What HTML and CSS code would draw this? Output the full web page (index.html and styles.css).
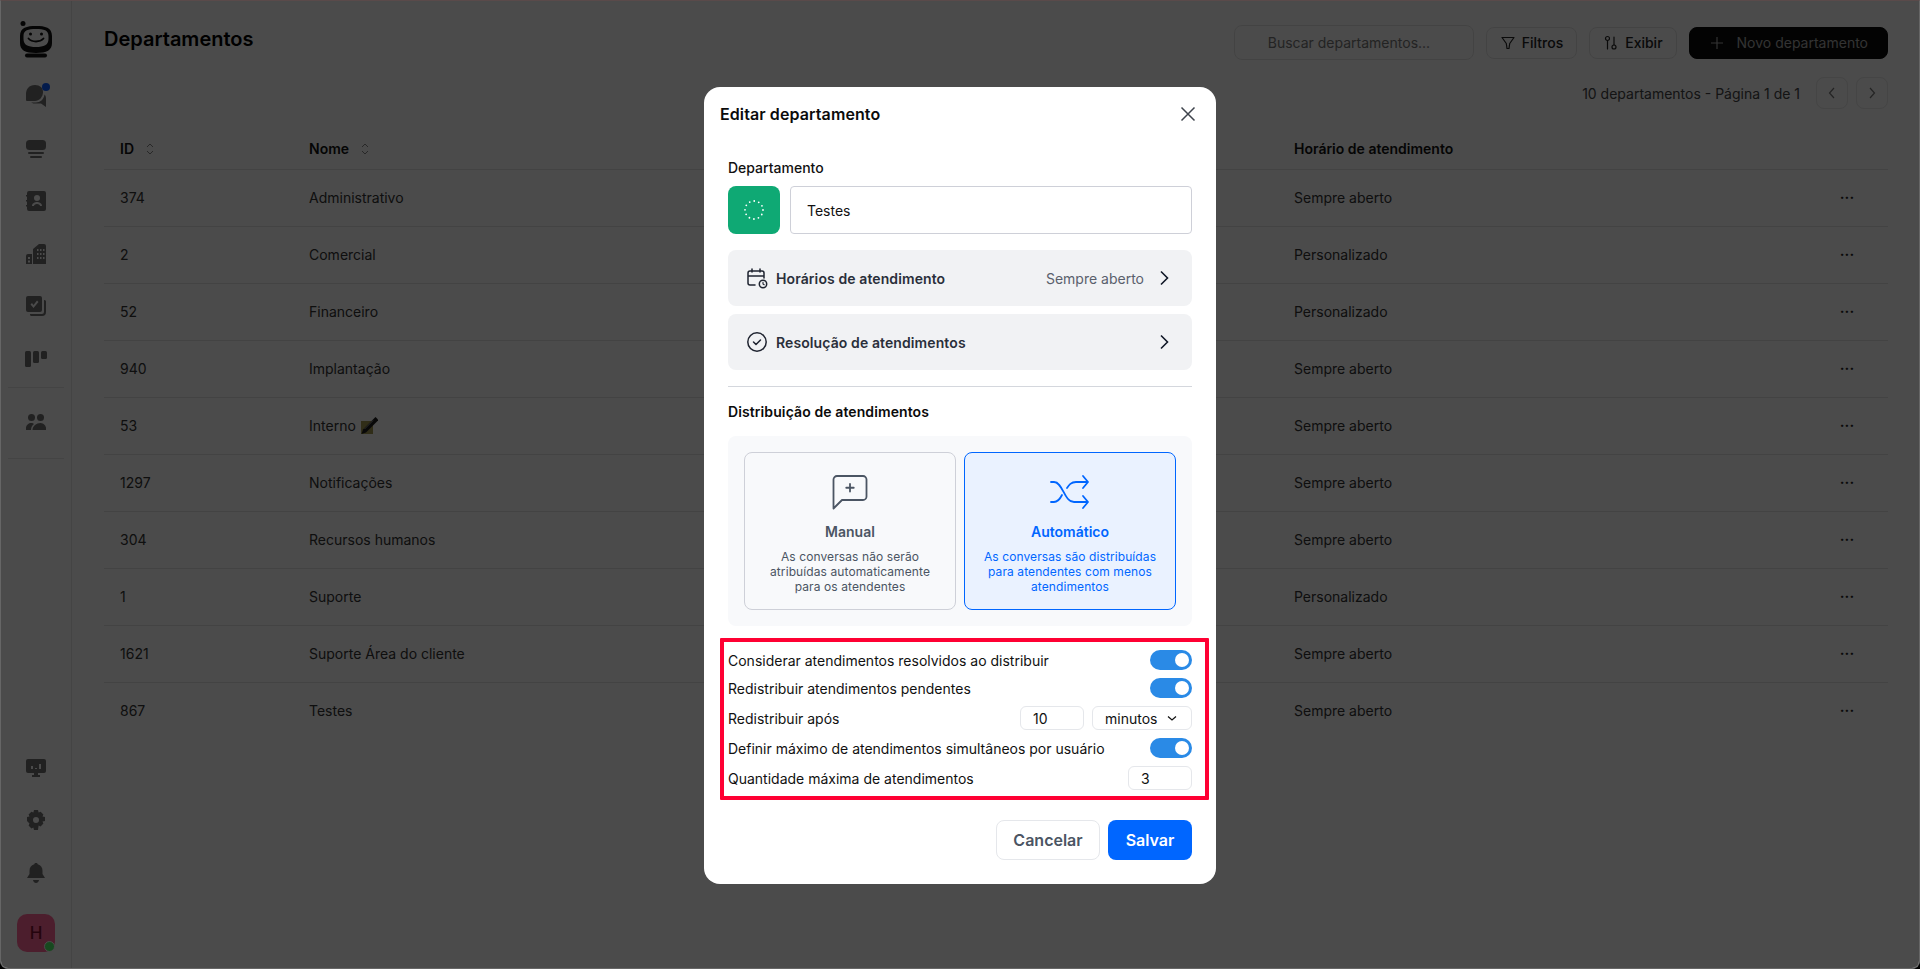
FILE: index.html
```html
<!DOCTYPE html>
<html lang="pt-BR">
<head>
  <meta charset="UTF-8" />
  <meta name="viewport" content="width=device-width, initial-scale=1.0" />
  <title>Departamentos</title>
  <link rel="stylesheet" href="styles.css">
</head>
<body>
  <div class="app">

    <aside class="sidebar">
      <a class="logo">
        <svg width="34" height="38" viewBox="0 0 34 38">
          <circle cx="4" cy="3.500" r="2.500" fill="#111"/>
          <path fill-rule="evenodd" fill="#111" d="M17 6c9 0 16 1.500 16 10v7c0 7-5 10-16 10S1 30 1 23v-7C1 7.500 8 6 17 6zm0 3c-8 0-12.500 1-12.500 7v3c0 6 4.500 8 12.500 8s12.500-2 12.500-8v-3c0-6-4.500-7-12.500-7z"/>
          <rect x="6" y="33.500" width="22" height="4" rx="2" fill="#111"/>
          <circle cx="11.500" cy="14" r="1.500" fill="#111"/>
          <circle cx="22.500" cy="14" r="1.500" fill="#111"/>
          <path d="M9.500 18.500c3.500 4 11.500 4 15 0" fill="none" stroke="#111" stroke-width="1.800" stroke-linecap="round"/>
        </svg>
      </a>
      <nav class="side-nav">
        <a class="side-link has-dot">
          <svg width="20" height="22" viewBox="0 0 20 22"><path d="M9 0c5 0 8 3 8 7 0 5-4 9-8 9H1a1 1 0 0 1-1-1V9c0-5 3-9 9-9z"/><path d="M18.500 9.500c1 1 1.500 2.500 1.500 4V22l-5-3.500H7.500L5 17.500h5c4 0 8-3 8.500-8z"/></svg>
        </a>
        <a class="side-link">
          <svg width="20" height="20" viewBox="0 0 20 20"><rect x="0" y="1" width="20" height="10" rx="3.500"/><rect x="2" y="13" width="16" height="2" rx="1"/><rect x="4" y="17" width="12" height="2" rx="1"/></svg>
        </a>
        <a class="side-link">
          <svg width="20" height="20" viewBox="0 0 20 20"><path fill-rule="evenodd" d="M3 0h15a2 2 0 0 1 2 2v16a2 2 0 0 1-2 2H3a2 2 0 0 1-2-2V2a2 2 0 0 1 2-2zm8 4a3 3 0 1 0 0 6 3 3 0 0 0 0-6zm-5 11c0-3 3-4 5-4s5 1 5 4h-2c0-1-1-2-3-2s-3 1-3 2z"/><rect x="0" y="4" width="2" height="1.500"/><rect x="0" y="9" width="2" height="1.500"/><rect x="0" y="14" width="2" height="1.500"/></svg>
        </a>
        <a class="side-link">
          <svg width="20" height="20" viewBox="0 0 20 20"><path fill-rule="evenodd" d="M7 5l6-5h5a2 2 0 0 1 2 2v18H7zM11 5v2h1.500V5zm3 0v2h1.500V5zm3 0v2h1.500V5zM11 9v2h1.500V9zm3 0v2h1.500V9zm3 0v2h1.500V9zm-6 4v2h1.500v-2zm3 0v2h1.500v-2zm3 0v2h1.500v-2z"/><path fill-rule="evenodd" d="M2 10h4v10H0v-8a2 2 0 0 1 2-2zm0 3v2h2v-2zm0 3.500v2h2v-2z"/></svg>
        </a>
        <a class="side-link">
          <svg width="20" height="20" viewBox="0 0 20 20"><path fill-rule="evenodd" d="M2 0h12a2 2 0 0 1 2 2v12a2 2 0 0 1-2 2H2a2 2 0 0 1-2-2V2a2 2 0 0 1 2-2zm2.500 8.500L6 7l1.500 2L11 4.500 12.500 6 7.500 12z"/><path d="M18 4h.500A1.500 1.500 0 0 1 20 5.500V16a4 4 0 0 1-4 4H5.500A1.500 1.500 0 0 1 4 18.500V18h12a2 2 0 0 0 2-2z"/></svg>
        </a>
        <a class="side-link">
          <svg width="22" height="16" viewBox="0 0 22 16"><rect width="6" height="16" rx="1.500"/><rect x="8" width="6" height="12" rx="1.500"/><rect x="16" width="6" height="8" rx="1.500"/></svg>
        </a>
        <div class="side-rule"></div>
        <a class="side-link">
          <svg width="20" height="16" viewBox="0 0 20 16"><circle cx="5.500" cy="3.500" r="3.500"/><circle cx="14.500" cy="3.500" r="3.500"/><path d="M0 16v-2c0-3 3-5 5-5 1.500 0 2.500.500 3 1-1.500 1-3 3-3 6z"/><path d="M6.500 16c0-4 4-7 8-7 3 0 5.500 3 5.500 5v2z"/></svg>
        </a>
        <div class="side-rule side-rule-end"></div>
      </nav>
      <div class="side-bottom">
        <a class="side-link">
          <svg width="20" height="18" viewBox="0 0 20 18"><path fill-rule="evenodd" d="M2 0h16a2 2 0 0 1 2 2v10a2 2 0 0 1-2 2h-6v2h2v2H6v-2h2v-2H2a2 2 0 0 1-2-2V2a2 2 0 0 1 2-2zm3 7v3h2V7zm4 2v1h2V9zm4-4v5h2V5z"/></svg>
        </a>
        <a class="side-link">
          <svg width="20" height="20" viewBox="0 0 20 20"><path fill-rule="evenodd" d="M8 0h4l.600 2.600 2-.900 2.800 2.800-.900 2 2.500.500v4l-2.500.600.900 2-2.800 2.800-2-.900L12 20H8l-.600-2.500-2 .900-2.800-2.800.900-2L1 11V7l2.500-.500-.900-2 2.800-2.800 2 .900zM10 7a3 3 0 1 0 0 6 3 3 0 0 0 0-6z"/></svg>
        </a>
        <a class="side-link">
          <svg width="18" height="20" viewBox="0 0 18 20"><path d="M9 0c1 0 1.500.500 1.700 1.200C14 2 15.500 4.500 15.500 8v3l2.500 4H0l2.500-4V8c0-3.500 1.500-6 4.800-6.800C7.500.500 8 0 9 0z"/><path d="M6 17h6c0 1.500-1.500 3-3 3s-3-1.500-3-3z"/></svg>
        </a>
        <div class="avatar">H<span class="online"></span></div>
      </div>
    </aside>

    <main class="content">
      <div class="topbar">
        <h1>Departamentos</h1>
        <div class="toolbar">
          <div class="search">Buscar departamentos...</div>
          <button class="btn">
            <svg width="16" height="16" viewBox="0 0 16 16" fill="none" stroke="currentColor" stroke-width="1.200" stroke-linejoin="round"><path d="M2 2.500h12L9.700 8.500l-.700 5H7l-.700-5z"/></svg>
            Filtros
          </button>
          <button class="btn">
            <svg width="16" height="16" viewBox="0 0 16 16" fill="none" stroke="currentColor" stroke-width="1.200" stroke-linecap="round"><circle cx="4.500" cy="3.500" r="2"/><path d="M4.500 5.500V14M11 2v8"/><circle cx="11" cy="12" r="2"/></svg>
            Exibir
          </button>
          <button class="btn btn-dark">
            <svg width="16" height="16" viewBox="0 0 16 16" fill="none" stroke="currentColor" stroke-width="1.200"><path d="M8 2v12M2 8h12"/></svg>
            Novo departamento
          </button>
        </div>
      </div>

      <div class="pager">
        <span>10 departamentos - Página 1 de 1</span>
        <button class="page-btn"><svg width="16" height="16" viewBox="0 0 16 16" fill="none" stroke="currentColor" stroke-width="1.200"><path d="M10 3L5.500 8l4.500 5"/></svg></button>
        <button class="page-btn"><svg width="16" height="16" viewBox="0 0 16 16" fill="none" stroke="currentColor" stroke-width="1.200"><path d="M6 3l4.500 5L6 13"/></svg></button>
      </div>

      <table class="dept-table">
        <colgroup><col class="col-id"><col class="col-name"><col class="col-hours"><col class="col-actions"></colgroup>
        <thead>
          <tr>
            <th>ID <svg class="sort" width="8" height="12" viewBox="0 0 8 12" fill="none" stroke="currentColor"><path d="M1 4l3-3 3 3M1 8l3 3 3-3"/></svg></th>
            <th>Nome <svg class="sort" width="8" height="12" viewBox="0 0 8 12" fill="none" stroke="currentColor"><path d="M1 4l3-3 3 3M1 8l3 3 3-3"/></svg></th>
            <th>Horário de atendimento</th>
            <th></th>
          </tr>
        </thead>
        <tbody>
          <tr><td>374</td><td>Administrativo</td><td>Sempre aberto</td><td class="dots">···</td></tr>
          <tr><td>2</td><td>Comercial</td><td>Personalizado</td><td class="dots">···</td></tr>
          <tr><td>52</td><td>Financeiro</td><td>Personalizado</td><td class="dots">···</td></tr>
          <tr><td>940</td><td>Implantação</td><td>Sempre aberto</td><td class="dots">···</td></tr>
          <tr><td>53</td><td>Interno <svg class="emoji" width="18" height="18" viewBox="0 0 18 18"><rect x="1" y="4" width="12" height="13" fill="#a09850"/><path d="M15.500 0L3 12.500 1.500 17l4.500-1.500L18.500 3z" fill="#1c1c1c"/><path d="M13 3.500L4.500 12" stroke="#9a9a9a" stroke-width="1"/></svg></td><td>Sempre aberto</td><td class="dots">···</td></tr>
          <tr><td>1297</td><td>Notificações</td><td>Sempre aberto</td><td class="dots">···</td></tr>
          <tr><td>304</td><td>Recursos humanos</td><td>Sempre aberto</td><td class="dots">···</td></tr>
          <tr><td>1</td><td>Suporte</td><td>Personalizado</td><td class="dots">···</td></tr>
          <tr><td>1621</td><td>Suporte Área do cliente</td><td>Sempre aberto</td><td class="dots">···</td></tr>
          <tr><td>867</td><td>Testes</td><td>Sempre aberto</td><td class="dots">···</td></tr>
        </tbody>
      </table>
    </main>

    <div class="overlay">
      <section class="modal">
        <header class="modal-head">
          <h2>Editar departamento</h2>
          <svg width="24" height="24" viewBox="0 0 24 24" fill="none" stroke="#3f444d" stroke-width="1.500"><path d="M5.500 5.500l13 13M18.500 5.500l-13 13"/></svg>
        </header>

        <div class="modal-body">
          <label class="field-label">Departamento</label>
          <div class="name-row">
            <div class="swatch">
              <svg width="22" height="22" viewBox="0 0 22 22"><circle cx="11" cy="11" r="9" fill="none" stroke="#fff" stroke-width="1.800" stroke-linecap="round" stroke-dasharray="0 4.710"/></svg>
            </div>
            <div class="name-input">Testes</div>
          </div>

          <div class="nav-rows">
            <div class="nav-row">
              <svg width="22" height="22" viewBox="0 0 22 22" fill="none" stroke="#1f2430" stroke-width="1.500" stroke-linecap="round"><path d="M9 18H4a2 2 0 0 1-2-2V6a2 2 0 0 1 2-2h12a2 2 0 0 1 2 2v5M2 9h16M6 2v3M14 2v3"/><circle cx="17" cy="17" r="3.700"/><path d="M17 15.200V17l1.200.700" stroke-width="1.100"/></svg>
              <span class="nav-title">Horários de atendimento</span>
              <span class="nav-value">Sempre aberto</span>
              <svg class="chev" width="20" height="20" viewBox="0 0 20 20" fill="none" stroke="#111827" stroke-width="1.600"><path d="M7 3.500l6.500 6.500L7 16.500"/></svg>
            </div>
            <div class="nav-row">
              <svg width="22" height="22" viewBox="0 0 22 22" fill="none" stroke="#1f2430" stroke-width="1.500" stroke-linecap="round" stroke-linejoin="round"><circle cx="11" cy="11" r="9.200"/><path d="M7.500 11l2.500 2.500 4.500-4.500"/></svg>
              <span class="nav-title">Resolução de atendimentos</span>
              <svg class="chev" width="20" height="20" viewBox="0 0 20 20" fill="none" stroke="#111827" stroke-width="1.600"><path d="M7 3.500l6.500 6.500L7 16.500"/></svg>
            </div>
          </div>

          <hr class="rule">

          <h3>Distribuição de atendimentos</h3>

          <div class="dist-panel">
            <div class="dist-card">
              <svg width="36" height="36" viewBox="0 0 36 36" fill="none" stroke="#4b5563" stroke-width="1.800" stroke-linejoin="round" stroke-linecap="round"><path d="M5 2h26a3.500 3.500 0 0 1 3.500 3.500v17a3.500 3.500 0 0 1-3.500 3.500H10l-8.500 8.500V5.500A3.500 3.500 0 0 1 5 2z"/><path d="M18 10v7.500M14.250 13.750h7.500"/></svg>
              <strong>Manual</strong>
              <p>As conversas não serão atribuídas automaticamente para os atendentes</p>
            </div>
            <div class="dist-card active">
              <svg width="40" height="36" viewBox="0 0 40 36" fill="none" stroke="#0066ff" stroke-width="1.800" stroke-linecap="round" stroke-linejoin="round"><path d="M1 8h3c9 0 10 20 20 20h14M1 28h3c4 0 6-3 8-7M17 14c2-3 4-6 9-6h12M33 2l5 6-5 6M33 22l5 6-5 6"/></svg>
              <strong>Automático</strong>
              <p>As conversas são distribuídas para atendentes com menos atendimentos</p>
            </div>
          </div>

          <div class="options">
            <div class="option"><span>Considerar atendimentos resolvidos ao distribuir</span><span class="toggle"></span></div>
            <div class="option"><span>Redistribuir atendimentos pendentes</span><span class="toggle"></span></div>
            <div class="option">
              <span>Redistribuir após</span>
              <span class="option-inputs">
                <span class="mini-input">10</span>
                <span class="mini-select">minutos
                  <svg width="12" height="12" viewBox="0 0 12 12" fill="none" stroke="#111" stroke-width="1.200"><path d="M2 4.500L6 8l4-3.500"/></svg>
                </span>
              </span>
            </div>
            <div class="option"><span>Definir máximo de atendimentos simultâneos por usuário</span><span class="toggle"></span></div>
            <div class="option"><span>Quantidade máxima de atendimentos</span><span class="mini-input">3</span></div>
            <div class="annotation"></div>
          </div>

          <div class="modal-actions">
            <button class="btn-cancel">Cancelar</button>
            <button class="btn-save">Salvar</button>
          </div>
        </div>
      </section>
    </div>
  </div>
</body>
</html>
```

FILE: styles.css
```css
* {
  box-sizing: border-box;
}

html,
body {
  height: 100%;
}

body {
  margin: 0;
  background: #000;
  font-family: Inter, "Noto Sans", sans-serif;
  font-size: 14px;
  color: #111;
}

.app {
  position: relative;
  display: flex;
  height: 969px;
  overflow: hidden;
  background: #fafafa;
  border: 1px solid #666;
  border-top-color: #5a4a4a;
  border-radius: 0 0 8px 8px;
}

/* sidebar */
.sidebar {
  width: 71px;
  flex-shrink: 0;
  display: flex;
  flex-direction: column;
  align-items: center;
  border-right: 1px solid #e5e5e5;
}

.logo {
  display: flex;
  margin-top: 19px;
  height: 38px;
}

.side-nav {
  display: flex;
  flex-direction: column;
  align-items: center;
  width: 100%;
  margin-top: 12px;
}

.side-link {
  position: relative;
  display: flex;
  align-items: center;
  justify-content: center;
  height: 52.500px;
  width: 100%;
}

.side-link svg {
  fill: #6e6e6e;
}

.has-dot::after {
  content: "";
  position: absolute;
  top: 13px;
  left: 41px;
  width: 8px;
  height: 8px;
  border-radius: 50%;
  background: #0a5cff;
}

.side-rule {
  width: 56px;
  height: 1px;
  margin: 2px 0 8px;
  background: #e5e5e5;
}

.side-rule-end {
  margin-top: 9px;
}

.side-bottom {
  display: flex;
  flex-direction: column;
  align-items: center;
  width: 100%;
  margin-top: auto;
  padding-bottom: 16px;
}

.avatar {
  position: relative;
  display: flex;
  align-items: center;
  justify-content: center;
  width: 38px;
  height: 38px;
  margin-top: 15px;
  border-radius: 10px;
  background: #ff6497;
  color: #7a1030;
  font-size: 17px;
  font-weight: 500;
}

.online {
  position: absolute;
  right: 0;
  bottom: 0;
  width: 11px;
  height: 11px;
  border-radius: 50%;
  background: #4ff568;
  border: 1.500px solid #fafafa;
}

/* main */
.content {
  flex: 1;
  min-width: 0;
  padding: 24px 31px 0 32px;
}

.topbar {
  display: flex;
  justify-content: space-between;
  align-items: flex-start;
}

h1 {
  margin: 0;
  font-size: 20px;
  line-height: 28px;
  font-weight: 600;
  color: #000;
}

.toolbar {
  display: flex;
  align-items: center;
  gap: 12px;
}

.search {
  display: flex;
  align-items: center;
  width: 240px;
  height: 35px;
  padding-left: 33px;
  border: 1px solid #e2e2e2;
  border-radius: 8px;
  color: #777;
}

.btn {
  display: flex;
  align-items: center;
  gap: 6px;
  height: 32px;
  padding: 0 13px;
  background: none;
  border: 1px solid #e2e2e2;
  border-radius: 8px;
  font: 500 14px Inter, sans-serif;
  color: #222;
}

.btn-dark {
  gap: 12px;
  padding: 0 19px;
  background: #0a0a0a;
  border-color: #0a0a0a;
  color: #aaa;
  font-weight: 400;
}

.pager {
  display: flex;
  justify-content: flex-end;
  align-items: center;
  gap: 8px;
  margin-top: 17px;
  color: #444;
}

.pager span {
  margin-right: 8px;
}

.page-btn {
  display: flex;
  align-items: center;
  justify-content: center;
  width: 32px;
  height: 32px;
  padding: 0;
  background: none;
  border: 1px solid #e6e6e6;
  border-radius: 8px;
  color: #777;
}

.dept-table {
  width: 100%;
  margin-top: 20px;
  border-collapse: collapse;
  table-layout: fixed;
}

.col-id { width: 189px; }
.col-name { width: 985px; }
.col-actions { width: 82px; }

.dept-table th {
  height: 40px;
  padding: 0 16px;
  text-align: left;
  font-weight: 600;
  color: #111;
  border-bottom: 1px solid #e2e2e2;
}

.dept-table td {
  height: 57px;
  padding: 0 16px;
  color: #333;
  border-bottom: 1px solid #e2e2e2;
}

.dept-table tbody tr:last-child td {
  border-bottom: none;
}

.sort {
  margin-left: 8px;
  vertical-align: -1px;
  color: #888;
}

.emoji {
  vertical-align: -4px;
}

.dept-table .dots {
  padding: 0;
  text-align: center;
  font-size: 15px;
  font-weight: 600;
  color: #222;
}

/* modal */
.overlay {
  position: absolute;
  inset: 0;
  display: flex;
  align-items: center;
  justify-content: center;
  padding-top: 2px;
  background: rgba(0, 0, 0, 0.7);
}

.modal {
  width: 512px;
  background: #fff;
  border-radius: 16px;
}

.modal-head {
  display: flex;
  align-items: center;
  justify-content: space-between;
  height: 54px;
  padding: 0 16px;
}

h2 {
  margin: 0;
  font-size: 16px;
  font-weight: 600;
  letter-spacing: 0.1px;
  color: #0b0b0b;
}

.modal-body {
  padding: 17px 24px 24px;
}

.field-label {
  display: block;
  line-height: 20px;
  font-weight: 500;
}

.name-row {
  display: flex;
  gap: 10px;
  margin-top: 8px;
}

.swatch {
  display: flex;
  align-items: center;
  justify-content: center;
  width: 52px;
  height: 48px;
  border-radius: 8px;
  background: #0fa974;
}

.name-input {
  flex: 1;
  display: flex;
  align-items: center;
  height: 48px;
  padding-left: 16px;
  border: 1px solid #ced0d8;
  border-radius: 4px;
}

.nav-rows {
  display: flex;
  flex-direction: column;
  gap: 8px;
  margin-top: 16px;
}

.nav-row {
  display: flex;
  align-items: center;
  gap: 8px;
  height: 56px;
  padding: 0 18px;
  background: #f1f2f4;
  border-radius: 8px;
}

.nav-title {
  flex: 1;
  font-weight: 600;
  letter-spacing: 0.1px;
  color: #2a2f3a;
}

.nav-value {
  color: #5a606c;
}

.chev {
  margin-left: 2px;
}

.rule {
  height: 1px;
  margin: 16px 0 15px;
  border: 0;
  background: #d4d7dd;
}

h3 {
  margin: 0;
  font-size: 14px;
  line-height: 20px;
  font-weight: 600;
  letter-spacing: 0.1px;
  color: #0b0b0b;
}

.dist-panel {
  display: flex;
  gap: 8px;
  margin-top: 14px;
  padding: 16px;
  background: #f8f9fb;
  border-radius: 8px;
}

.dist-card {
  flex: 1;
  display: flex;
  flex-direction: column;
  align-items: center;
  height: 158px;
  padding: 21px 12px 0;
  border: 1px solid #ced0d8;
  border-radius: 8px;
  color: #4b5563;
  text-align: center;
}

.dist-card strong {
  margin-top: 12px;
  line-height: 20px;
  font-weight: 600;
}

.dist-card p {
  margin: 7px 0 0;
  font-size: 12px;
  line-height: 15px;
  letter-spacing: 0.1px;
}

.dist-card.active {
  background: #eaf2ff;
  border-color: #0066ff;
  color: #0066ff;
}

.options {
  position: relative;
  display: flex;
  flex-direction: column;
  gap: 8px;
  margin-top: 24px;
}

.option {
  display: flex;
  align-items: center;
  justify-content: space-between;
}

.toggle {
  position: relative;
  width: 42px;
  height: 20px;
  border-radius: 10px;
  background: #2a8ae6;
}

.toggle::after {
  content: "";
  position: absolute;
  top: 3px;
  right: 3px;
  width: 14px;
  height: 14px;
  border-radius: 50%;
  background: #fff;
}

.option-inputs {
  display: flex;
  gap: 8px;
}

.mini-input,
.mini-select {
  display: flex;
  align-items: center;
  height: 24px;
  padding-left: 12px;
  border: 1px solid #e5e7eb;
  border-radius: 6px;
}

.mini-input {
  width: 64px;
}

.mini-select {
  justify-content: space-between;
  width: 100px;
  padding-right: 13px;
}

/* red box drawn over the options in the screenshot */
.annotation {
  position: absolute;
  top: -12px;
  left: -8px;
  width: 489px;
  height: 162px;
  border: 4px solid #ff0033;
  border-radius: 1px;
  pointer-events: none;
}

.modal-actions {
  display: flex;
  justify-content: flex-end;
  gap: 8px;
  margin-top: 30px;
}

.btn-cancel,
.btn-save {
  height: 40px;
  border-radius: 8px;
  font: 600 16px Inter, sans-serif;
}

.btn-cancel {
  width: 104px;
  background: #fff;
  border: 1px solid #e5e7eb;
  color: #4b5563;
}

.btn-save {
  width: 84px;
  background: #0066ff;
  border: 0;
  color: #fff;
}
```
